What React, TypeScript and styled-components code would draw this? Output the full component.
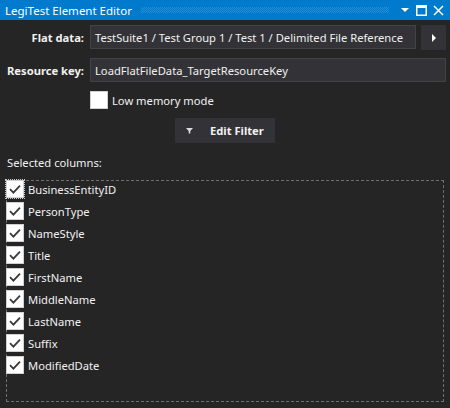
import styled, { createGlobalStyle } from "styled-components";

const GlobalStyle = createGlobalStyle`
  html, body {
    margin: 0;
    padding: 0;
    background: #252526;
  }
  body {
    font-family: "Noto Sans", "Open Sans", sans-serif;
    font-size: 11.2px;
    color: #f1f1f1;
  }
`;

const columns = [
  "BusinessEntityID",
  "PersonType",
  "NameStyle",
  "Title",
  "FirstName",
  "MiddleName",
  "LastName",
  "Suffix",
  "ModifiedDate",
];

const CheckMark = () => (
  <svg width="14" height="14" viewBox="0 0 14 14">
    <path d="M2 7.2 L5.4 10.6 L12 3.6" fill="none" stroke="#3a3a3a" strokeWidth="1.8" />
  </svg>
);

export default function App() {
  return (
    <Window>
      <GlobalStyle />
      <TitleBar>
        <Title>LegiTest Element Editor</Title>
        <Grip />
        <TitleButtons>
          <svg width="10" height="10" viewBox="0 0 10 10">
            <path d="M1 3 H9 L5 7 Z" fill="#fff" />
          </svg>
          <svg width="11" height="11" viewBox="0 0 11 11">
            <rect x="0.75" y="0.75" width="9.5" height="9.5" fill="none" stroke="#fff" strokeWidth="1.5" />
            <rect x="0" y="0" width="11" height="3" fill="#fff" />
          </svg>
          <svg width="11" height="11" viewBox="0 0 11 11">
            <path d="M1 1 L10 10 M10 1 L1 10" stroke="#fff" strokeWidth="1.5" />
          </svg>
        </TitleButtons>
      </TitleBar>
      <Body>
        <Form>
          <Label>Flat data:</Label>
          <FieldRow>
            <TextBox>TestSuite1 / Test Group 1 / Test 1 / Delimited File Reference</TextBox>
            <PickButton>
              <svg width="6" height="8" viewBox="0 0 6 8">
                <path d="M1 0 L5 4 L1 8 Z" fill="#fff" />
              </svg>
            </PickButton>
          </FieldRow>
          <Label>Resource key:</Label>
          <TextBox>LoadFlatFileData_TargetResourceKey</TextBox>
          <span />
          <CheckRow>
            <Box />
            Low memory mode
          </CheckRow>
        </Form>
        <FilterButton>
          <svg width="7" height="7" viewBox="0 0 7 7">
            <path d="M0 1 H7 L4.3 4 V6.5 H2.7 V4 Z" fill="#ddd" />
          </svg>
          <span>Edit Filter</span>
        </FilterButton>
        <SectionLabel>Selected columns:</SectionLabel>
        <ColumnList>
          {columns.map((c, i) => (
            <ColumnRow key={c}>
              <Box $focused={i === 0}>
                <CheckMark />
              </Box>
              {c}
            </ColumnRow>
          ))}
        </ColumnList>
      </Body>
    </Window>
  );
}

const Window = styled.div`
  width: 450px;
  height: 408px;
  display: flex;
  flex-direction: column;
  background: #252526;
  overflow: hidden;
`;

const TitleBar = styled.div`
  height: 20px;
  background: #007acc;
  display: flex;
  align-items: center;
  padding: 0 4px 0 5px;
  gap: 9px;
  flex-shrink: 0;
`;

const Title = styled.div`
  color: #fff;
  font-size: 11.5px;
  white-space: nowrap;
`;

const Grip = styled.div`
  flex: 1;
  height: 6px;
  margin-right: 2px;
  background-image: repeating-conic-gradient(rgba(255, 255, 255, 0.16) 0 25%, transparent 0 50%);
  background-size: 2px 2px;
`;

const TitleButtons = styled.div`
  display: flex;
  align-items: center;
  gap: 6px;
  padding-right: 2px;
`;

const Body = styled.div`
  flex: 1;
  display: flex;
  flex-direction: column;
  padding: 5px 4px 6px 6px;
  min-height: 0;
`;

const Form = styled.div`
  display: grid;
  grid-template-columns: 78px minmax(0, 1fr);
  column-gap: 6px;
  row-gap: 8px;
  align-items: center;
`;

const Label = styled.div`
  font-weight: 700;
  text-align: right;
  white-space: nowrap;
`;

const FieldRow = styled.div`
  display: flex;
  gap: 5px;
  min-width: 0;
`;

const TextBox = styled.div`
  flex: 1;
  min-width: 0;
  height: 24px;
  box-sizing: border-box;
  border: 1px solid #434346;
  background: #333337;
  padding: 0 4px;
  display: flex;
  align-items: center;
  white-space: nowrap;
  overflow: hidden;
`;

const PickButton = styled.div`
  width: 25px;
  height: 25px;
  flex-shrink: 0;
  background: #333337;
  display: flex;
  align-items: center;
  justify-content: center;
`;

const CheckRow = styled.div`
  display: flex;
  align-items: center;
  gap: 4px;
  height: 20px;
`;

const Box = styled.div<{ $focused?: boolean }>`
  width: 18px;
  height: 18px;
  box-sizing: border-box;
  background: #fff;
  border: 1px solid #d0d0d0;
  outline: ${(p) => (p.$focused ? "1px dotted #c8c8c8" : "none")};
  display: flex;
  align-items: center;
  justify-content: center;
  flex-shrink: 0;
`;

const FilterButton = styled.div`
  align-self: flex-start;
  margin-top: 8px;
  margin-left: 169px;
  width: 100px;
  height: 25px;
  background: #333337;
  display: flex;
  align-items: center;
  gap: 17px;
  padding-left: 11px;
  box-sizing: border-box;
  font-weight: 700;
`;

const SectionLabel = styled.div`
  margin-top: 10px;
  padding-left: 1px;
  height: 20px;
  line-height: 20px;
`;

const ColumnList = styled.div`
  margin-top: 7px;
  margin-right: 2px;
  flex: 1;
  border: 1px dashed #707070;
  display: flex;
  flex-direction: column;
  gap: 4px;
`;

const ColumnRow = styled.div`
  display: flex;
  align-items: center;
  gap: 4px;
  height: 18px;
  margin-left: -1px;

  &:first-child {
    margin-top: -1px;
  }
`;
